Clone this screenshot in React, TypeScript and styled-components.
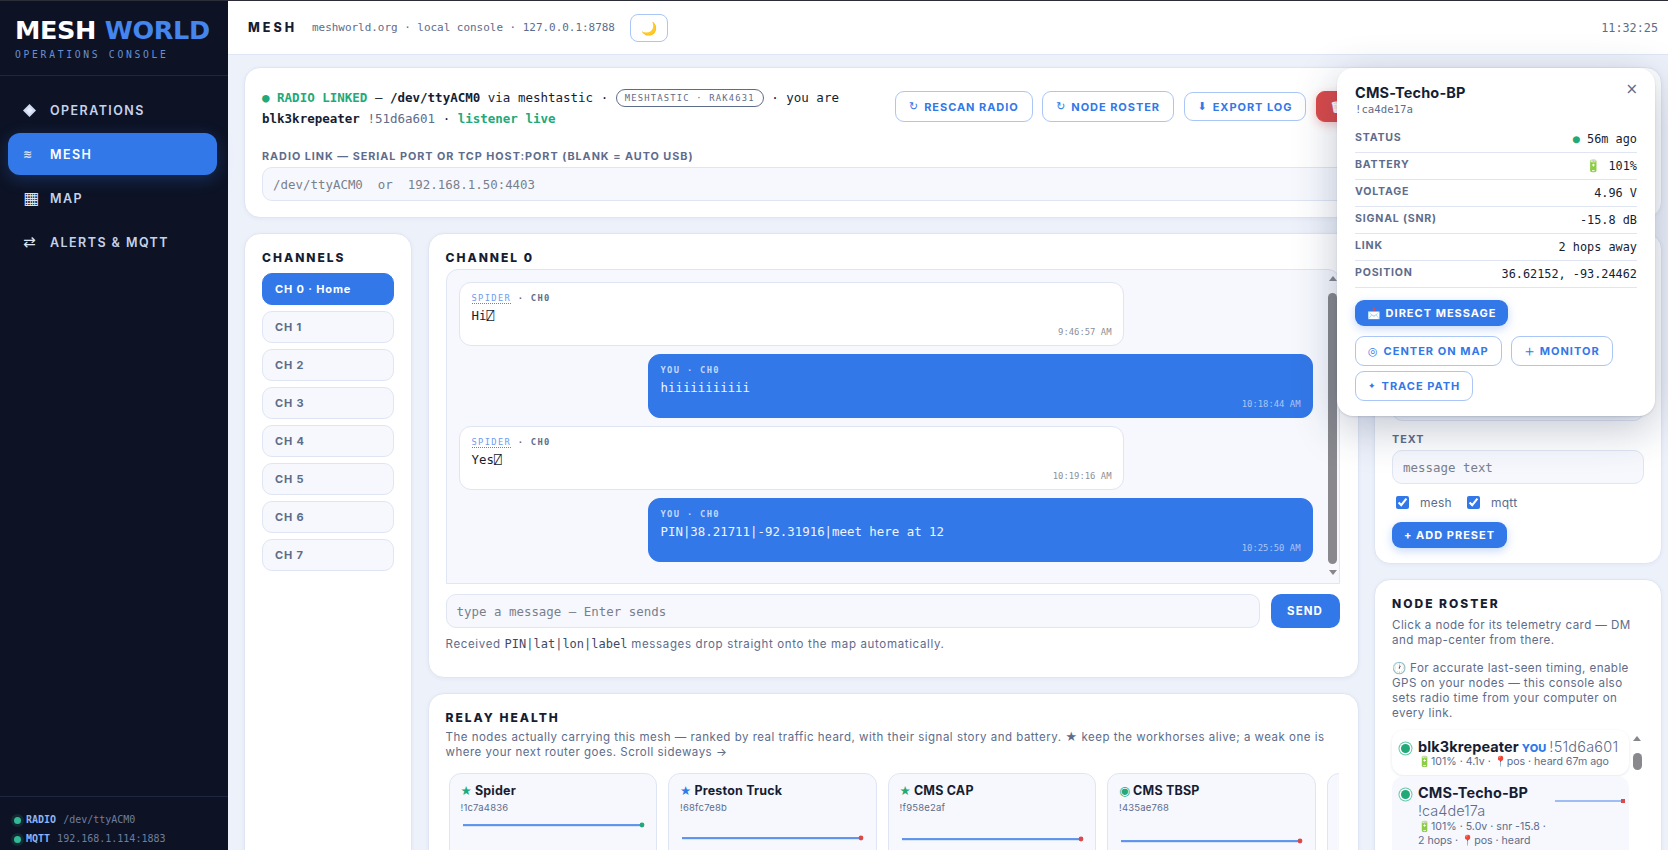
import React from "react";
import styled, { createGlobalStyle } from "styled-components";

const SANS = `Inter, "Noto Sans", "Liberation Sans", sans-serif`;
const MONO = `"DejaVu Sans Mono", "Liberation Mono", monospace`;
const BLUE = "#3378e8";
const INK = "#161d33";
const GREY = "#5e6c8b";
const LINE = "#dfe5f2";
const SOFT = "#f6f8fd";
const GREEN = "#22a97a";
const RED = "#d94a4a";

const Global = createGlobalStyle`
  html, body { margin: 0; height: 100%; overflow: hidden; background: #edf1fa; }
  * { box-sizing: border-box; }
  body { font-family: ${SANS}; color: ${INK}; }
`;

const Shell = styled.div`
  display: flex; height: 100vh; border-top: 1px solid #2b2e38; overflow: hidden; position: relative;
`;
const Sidebar = styled.aside`
  width: 228px; flex: none; background: #0d1325; display: flex; flex-direction: column; color: #fff;
`;
const Brand = styled.div`
  height: 75px; padding: 15px 15px 0; border-bottom: 1px solid #1d2742; flex: none;
`;
const Logo = styled.div`
  font: 800 25.5px/28px "DejaVu Sans", sans-serif; letter-spacing: -0.35px; white-space: nowrap;
  span { color: #4485ee; }
`;
const LogoSub = styled.div`
  font: 500 9.7px/12px ${MONO}; letter-spacing: 2.7px; color: #6a8fd2; margin-top: 5px;
`;
const Nav = styled.nav`
  flex: 1; padding: 13px 11px 0 8px; display: flex; flex-direction: column; gap: 2.2px;
`;
const NavItem = styled.div<{ $active?: boolean }>`
  height: 42px; border-radius: 12px; display: flex; align-items: center; padding-left: 15px;
  font: 600 12.5px ${SANS}; letter-spacing: 1.45px;
  color: ${(p) => (p.$active ? "#fff" : "#c5d2ec")};
  background: ${(p) => (p.$active ? BLUE : "transparent")};
  box-shadow: ${(p) => (p.$active ? "0 4px 16px rgba(51,120,232,.28)" : "none")};
`;
const NavIcon = styled.span<{ $size?: number; $bold?: boolean }>`
  width: 27px; flex: none; display: flex; align-items: center;
  font: ${(p) => (p.$bold ? 700 : 400)} ${(p) => p.$size ?? 15}px/1 "DejaVu Sans", sans-serif; color: #dbe4f7;
`;
const SideFoot = styled.div`
  height: 54px; border-top: 1px solid #1d2742; padding: 18px 0 0 14px; flex: none;
  display: flex; flex-direction: column; gap: 9px;
`;
const FootRow = styled.div`
  display: flex; align-items: center; gap: 5px; font: 400 10px/10px ${MONO}; color: #6f7e9e; white-space: nowrap;
  b { color: #8db4f2; font-weight: 700; margin-right: 1px; }
`;
const FootDot = styled.i`
  width: 7px; height: 7px; border-radius: 50%; background: #33b995; box-shadow: 0 0 0 3px rgba(51,185,149,.14);
`;

const Column = styled.div`
  flex: 1; min-width: 0; display: flex; flex-direction: column;
`;
const Topbar = styled.header`
  height: 54px; flex: none; background: #fff; border-bottom: 1px solid ${LINE};
  display: flex; align-items: center; padding: 0 10px 0 20px;
`;
const TopTitle = styled.div`
  font: 800 12.5px ${SANS}; letter-spacing: 3px; color: ${INK}; width: 64px;
`;
const TopMeta = styled.div`
  font: 400 10.95px ${MONO}; color: ${GREY}; white-space: nowrap;
`;
const ThemeButton = styled.div`
  width: 38px; height: 28px; margin-left: 15px; border: 1px solid #a9c6f6; border-radius: 8px;
  display: flex; align-items: center; justify-content: center; font-size: 13px;
`;
const Clock = styled.div`
  margin-left: auto; font: 400 11.8px ${MONO}; color: ${GREY};
`;

const Main = styled.main`
  flex: 1; min-height: 0; padding: 12px 6px 0 16px; display: flex; flex-direction: column; gap: 15px; overflow: hidden;
`;
const Card = styled.section`
  background: #fff; border: 1px solid ${LINE}; border-radius: 16px; padding: 17px 17px;
  box-shadow: 0 1px 4px rgba(40,60,110,.05);
`;
const Banner = styled(Card)`
  height: 151px; flex: none; padding: 17px 17px 0;
`;
const BannerTop = styled.div`
  display: flex; align-items: flex-start; height: 66px; overflow: visible;
`;
const Status = styled.div`
  width: 590px; flex: none; font: 400 12.5px/21px ${MONO}; color: ${INK}; padding-top: 2px;
`;
const Ok = styled.span`
  color: ${GREEN};
`;
const OkBold = styled(Ok)`
  font-weight: 700;
`;
const Strong = styled.b`
  font-weight: 700;
`;
const Dim = styled.span`
  color: ${GREY};
`;
const Pill = styled.span`
  display: inline-block; border: 1px solid ${GREY}; border-radius: 10px; padding: 0 8px;
  font: 400 8.8px/16px ${MONO}; letter-spacing: 1.2px; color: ${GREY}; vertical-align: 1px;
`;
const Actions = styled.div`
  display: flex; flex: none; gap: 9.5px; align-items: center; padding-top: 6px; margin-left: 43px;
`;
const GhostButton = styled.div`
  height: 31px; padding: 0 13px; border: 1px solid #a9c6f6; border-radius: 9px; background: #fff;
  color: ${BLUE}; font: 700 11px ${SANS}; letter-spacing: 0.95px; display: inline-flex; align-items: center; gap: 5px; white-space: nowrap;
  i { font: 400 11px "DejaVu Sans", sans-serif; }
`;
const ShortButton = styled(GhostButton)`
  height: 29px;
`;
const RedButton = styled(GhostButton)`
  background: ${RED}; border-color: ${RED}; color: #fff; box-shadow: 0 3px 10px rgba(217,74,74,.3);
`;
const FieldLabel = styled.label`
  display: block; font: 700 10.8px/12px ${SANS}; letter-spacing: 0.98px; color: ${GREY}; margin-bottom: 4px; white-space: nowrap;
`;
const TextField = styled.input`
  display: block; width: 100%; height: 34px; border: 1px solid ${LINE}; border-radius: 10px; background: ${SOFT};
  padding: 0 10px; font: 400 12.45px ${MONO}; color: ${INK}; outline: none;
  &::placeholder { color: #7a7f8c; opacity: 1; }
`;

const Grid = styled.div`
  flex: 1; min-height: 0; display: grid; grid-template-columns: 168px 931px 288px; gap: 15px 15.5px; align-items: stretch;
`;
const Stack = styled.div`
  display: flex; flex-direction: column; gap: 15px; min-height: 0;
`;
const CardTitle = styled.h2`
  margin: 0; font: 800 12px/14px ${SANS}; letter-spacing: 2px; color: ${INK}; white-space: nowrap;
`;
const ChannelList = styled(Card)`
  height: 640px; padding-top: 17px; display: flex; flex-direction: column; gap: 6px;
  h2 { margin-bottom: 2px; }
`;
const ChannelButton = styled.div<{ $on?: boolean }>`
  height: 32px; border-radius: 10px; padding-left: 12px; display: flex; align-items: center;
  font: 700 11px ${SANS}; letter-spacing: 0.85px;
  color: ${(p) => (p.$on ? "#fff" : GREY)};
  background: ${(p) => (p.$on ? BLUE : SOFT)};
  border: 1px solid ${(p) => (p.$on ? BLUE : LINE)};
`;
const ChatCard = styled(Card)`
  height: 445px; flex: none; padding: 17px 17px 0;
`;
const MsgFrame = styled.div`
  margin-top: 4px; height: 315px; background: ${SOFT}; border: 1px solid ${LINE}; border-radius: 12px 12px 0 0;
  display: flex; width: 894px;
`;
const MsgList = styled.div`
  flex: 1; min-width: 0; padding: 12px 14px 0 12px; display: flex; flex-direction: column; gap: 8px;
`;
const Msg = styled.div<{ $me?: boolean }>`
  width: 665px; height: 64px; border-radius: 12px; padding: 8px 12px; position: relative; flex: none;
  align-self: ${(p) => (p.$me ? "flex-end" : "flex-start")};
  background: ${(p) => (p.$me ? BLUE : "#fff")};
  border: 1px solid ${(p) => (p.$me ? BLUE : LINE)};
  color: ${(p) => (p.$me ? "#eef4ff" : INK)};
`;
const MsgMeta = styled.div<{ $me?: boolean }>`
  font: 700 8.8px/14px ${MONO}; letter-spacing: 1.3px; color: ${(p) => (p.$me ? "#c2d7fb" : GREY)};
  span { color: #6f9def; border-bottom: 1px dotted #4f87ea; font-weight: 500; }
`;
const MsgText = styled.div`
  font: 400 12.4px/17px ${MONO}; margin-top: 2px;
`;
const MsgTime = styled.div<{ $me?: boolean }>`
  position: absolute; right: 11px; bottom: 8px; font: 400 8.9px ${MONO};
  color: ${(p) => (p.$me ? "#a9c6f6" : "#8b8f9a")};
`;
const Rail = styled.div`
  width: 12px; flex: none; display: flex; flex-direction: column; align-items: center; padding: 6px 0 8px;
`;
const ArrowUp = styled.i`
  width: 0; height: 0; flex: none; border: 4.5px solid transparent; border-top: 0; border-bottom: 5px solid #86868c;
`;
const ArrowDown = styled.i`
  width: 0; height: 0; flex: none; margin-top: 6px; border: 4.5px solid transparent; border-bottom: 0; border-top: 5px solid #86868c;
`;
const Thumb = styled.div<{ $h?: number }>`
  width: 9px; margin-top: 12px; flex: ${(p) => (p.$h ? `0 0 ${p.$h}px` : "1")}; background: #88888d; border-radius: 5px;
`;
const ComposeRow = styled.div`
  display: flex; gap: 11px; margin-top: 10px; width: 894px;
`;
const ComposeField = styled(TextField)`
  flex: 1; width: auto;
`;
const SendButton = styled.div`
  width: 69px; height: 34px; border-radius: 10px; background: ${BLUE}; color: #fff; display: flex; align-items: center; justify-content: center;
  font: 700 11.5px ${SANS}; letter-spacing: 1.1px;
`;
const Hint = styled.p`
  margin: 0; font: 400 11.5px/15px ${SANS}; color: ${GREY}; letter-spacing: 0.5px;
  code { font: 400 12px ${MONO}; color: #3e4a66; letter-spacing: 0; }
`;
const ComposeHint = styled(Hint)`
  margin-top: 9px; letter-spacing: 0.65px;
`;
const RelayCard = styled(Card)`
  flex: 1; min-height: 220px; padding: 17px 17px 0; overflow: hidden;
`;
const RelayHint = styled(Hint)`
  margin-top: 5px; width: 890px;
`;
const RelayTrack = styled.div`
  margin-top: 13px; display: flex; gap: 11px; width: 893px; overflow: hidden; padding-left: 3px;
`;
const RelayNode = styled.div`
  flex: 0 0 208.5px; min-width: 0; height: 200px; background: ${SOFT}; border: 1px solid ${LINE}; border-radius: 12px; padding: 9px 11px 11px;
`;
const RelayName = styled.div`
  font: 700 12.5px/16px ${SANS}; letter-spacing: 0.2px; color: ${INK}; white-space: nowrap;
`;
const Mark = styled.span<{ $c: string }>`
  color: ${(p) => p.$c}; font-family: "DejaVu Sans", sans-serif; margin-right: 3px;
`;
const RelayId = styled.div`
  font: 400 9.5px/12px ${SANS}; color: ${GREY}; margin-top: 3px; letter-spacing: 0.2px;
`;
const Spark = styled.svg`
  display: block; margin-top: 5px;
`;

const PresetCard = styled(Card)`
  height: 331px; flex: none; padding: 17px 17px 0;
`;
const PresetHint = styled(Hint)`
  margin: 6px 0 70px;
`;
const FieldGap = styled.div`
  margin-top: 13px;
`;
const Checks = styled.div`
  display: flex; align-items: center; margin: 12px 0 0 4px; height: 13px; font: 400 12px ${SANS}; color: ${GREY};
  label { display: flex; align-items: center; gap: 11px; margin-right: 15px; letter-spacing: 0.25px; }
  input { margin: 0; width: 13px; height: 13px; accent-color: ${BLUE}; }
`;
const PrimaryButton = styled.div`
  display: inline-flex; align-items: center; gap: 5px; height: 26px; padding: 0 12px; border-radius: 9px; background: ${BLUE}; color: #fff;
  font: 700 11px ${SANS}; letter-spacing: 1px; white-space: nowrap; box-shadow: 0 3px 10px rgba(51,120,232,.28);
`;
const AddButton = styled(PrimaryButton)`
  margin-top: 13px;
`;
const RosterCard = styled(Card)`
  flex: 1; padding: 17px 17px 0; overflow: hidden;
`;
const RosterHint = styled(Hint)`
  margin-top: 7px; font-size: 11.6px; letter-spacing: 0.42px;
`;
const RosterNote = styled(RosterHint)`
  margin-top: 13px;
`;
const RosterWrap = styled.div`
  display: flex; margin-top: 9px; gap: 2px;
`;
const RosterList = styled.div`
  width: 237px; flex: none; display: flex; flex-direction: column; gap: 1px;
`;
const RosterItem = styled.div<{ $soft?: boolean }>`
  border-radius: 12px; display: flex; padding: 8px 7px 6px 7px; gap: 8px; position: relative;
  background: ${(p) => (p.$soft ? SOFT : "#fff")};
  box-shadow: ${(p) => (p.$soft ? "none" : "0 1px 3px rgba(40,60,110,.12)")};
`;
const NodeDot = styled.i`
  width: 9px; height: 9px; flex: none; margin: 6px 0 0 2px; border-radius: 50%; background: ${GREEN};
  box-shadow: 0 0 0 1.5px #fff, 0 0 0 2.5px #67c8a8;
`;
const RosterBody = styled.div<{ $narrow?: boolean }>`
  min-width: 0; ${(p) => (p.$narrow ? "width: 137px;" : "")}
`;
const RosterName = styled.div`
  font: 700 14.5px/17px ${SANS}; letter-spacing: 0.1px; color: ${INK}; white-space: nowrap;
  em { font: 800 11px ${SANS}; color: ${BLUE}; margin: 0 3px 0 3px; }
  span { font: 300 14.5px ${SANS}; color: ${GREY}; letter-spacing: .2px; }
`;
const RosterId = styled.div`
  font: 300 14.5px/19px ${SANS}; color: ${GREY};
`;
const RosterSub = styled.div`
  font: 400 10.6px/14px ${SANS}; color: ${GREY};
`;
const RosterSpark = styled.svg`
  position: absolute; right: 3px; top: 21px;
`;

const Popover = styled.div`
  position: absolute; left: 1337px; top: 67px; width: 318px; height: 348px; background: #fff; border-radius: 16px;
  padding: 16px 18px; box-shadow: 0 12px 44px rgba(30,45,85,.28), 0 1px 2px rgba(30,45,85,.15); z-index: 5;
`;
const PopName = styled.div`
  font: 700 14.5px/18px ${SANS}; letter-spacing: 0.15px; color: ${INK};
`;
const PopClose = styled.div`
  position: absolute; right: 17px; top: 12px; font: 400 15px/18px "DejaVu Sans", sans-serif; color: ${GREY};
`;
const PopId = styled.div`
  font: 400 10.7px/14px ${MONO}; color: ${GREY}; margin-top: 1px;
`;
const PopTable = styled.div`
  margin-top: 9px;
`;
const PopRow = styled.div`
  height: 27px; display: flex; justify-content: space-between; align-items: center; border-bottom: 1px solid ${LINE};
`;
const PopKey = styled.span`
  font: 700 10.6px ${SANS}; letter-spacing: 0.8px; color: ${GREY}; margin-top: -3px;
`;
const PopVal = styled.span`
  font: 400 11.85px ${MONO}; color: ${INK};
`;
const PopActions = styled.div`
  margin-top: 12px; display: flex; flex-wrap: wrap; gap: 5px 9px;
`;
const RowBreak = styled.div`
  flex: 0 0 100%; height: 0;
`;
const PopGhost = styled(GhostButton)`
  height: 30px; padding: 0 12px; letter-spacing: 1px;
`;
const PlusIcon = styled.i`
  && { font: 400 15px/1 "DejaVu Sans", sans-serif; margin: 0 -3px 0 -2px; }
`;
const TraceIcon = styled.i`
  && { font: 400 9px/1 "DejaVu Sans", sans-serif; }
`;

const channels = ["CH 0 · Home", "CH 1", "CH 2", "CH 3", "CH 4", "CH 5", "CH 6", "CH 7"];
const messages = [
  { me: false, who: "SPIDER", text: "Hi⍁", time: "9:46:57 AM" },
  { me: true, who: "YOU", text: "hiiiiiiiiiii", time: "10:18:44 AM" },
  { me: false, who: "SPIDER", text: "Yes⍁", time: "10:19:16 AM" },
  { me: true, who: "YOU", text: "PIN|38.21711|-92.31916|meet here at 12", time: "10:25:50 AM" },
];
const relays = [
  { name: "Spider", id: "!1c7a4836", mark: "★", c: GREEN, y: 6, end: GREEN },
  { name: "Preston Truck", id: "!68fc7e8b", mark: "★", c: BLUE, y: 19, end: RED },
  { name: "CMS CAP", id: "!f958e2af", mark: "★", c: GREEN, y: 20, end: RED },
  { name: "CMS TBSP", id: "!435ae768", mark: "◉", c: GREEN, y: 22, end: RED },
  { name: "", id: "", mark: "", c: GREEN, y: 22, end: RED },
];
const rows: [string, React.ReactNode][] = [
  ["STATUS", <><Ok>●</Ok> 56m ago</>],
  ["BATTERY", <>🔋 101%</>],
  ["VOLTAGE", "4.96 V"],
  ["SIGNAL (SNR)", "-15.8 dB"],
  ["LINK", "2 hops away"],
  ["POSITION", "36.62152, -93.24462"],
];

export default function App() {
  return (
    <Shell>
      <Global />
      <Sidebar>
        <Brand>
          <Logo>MESH <span>WORLD</span></Logo>
          <LogoSub>OPERATIONS CONSOLE</LogoSub>
        </Brand>
        <Nav>
          <NavItem>
            <NavIcon>
              <svg width="13" height="13" viewBox="0 0 13 13">
                <path d="M6.5 0 13 6.5 6.5 13 0 6.5Z" fill="#cfdbf4" />
                <path d="M6.5 3.2 9.8 6.5 6.5 9.8 3.2 6.5Z" fill="#e6edfb" />
              </svg>
            </NavIcon>
            OPERATIONS
          </NavItem>
          <NavItem $active><NavIcon $size={11} $bold>≋</NavIcon>MESH</NavItem>
          <NavItem><NavIcon $size={17}>▦</NavIcon>MAP</NavItem>
          <NavItem><NavIcon>⇄</NavIcon>ALERTS &amp; MQTT</NavItem>
        </Nav>
        <SideFoot>
          <FootRow><FootDot /><span><b>RADIO</b> /dev/ttyACM0</span></FootRow>
          <FootRow><FootDot /><span><b>MQTT</b> 192.168.1.114:1883</span></FootRow>
        </SideFoot>
      </Sidebar>
      <Column>
        <Topbar>
          <TopTitle>MESH</TopTitle>
          <TopMeta>meshworld.org · local console · 127.0.0.1:8788</TopMeta>
          <ThemeButton>🌙</ThemeButton>
          <Clock>11:32:25</Clock>
        </Topbar>
        <Main>
          <Banner>
            <BannerTop>
              <Status>
                <Ok>●</Ok> <OkBold>RADIO LINKED</OkBold> — <Strong>/dev/ttyACM0</Strong> via meshtastic · <Pill>MESHTASTIC · RAK4631</Pill> · you are <Strong>blk3krepeater</Strong> <Dim>!51d6a601</Dim> · <OkBold>listener live</OkBold>
              </Status>
              <Actions>
                <GhostButton><i>↻</i>RESCAN RADIO</GhostButton>
                <GhostButton><i>↻</i>NODE ROSTER</GhostButton>
                <ShortButton><i>⬇</i>EXPORT LOG</ShortButton>
                <RedButton>🗑 CLEAR</RedButton>
              </Actions>
            </BannerTop>
            <FieldLabel>RADIO LINK — SERIAL PORT OR TCP HOST:PORT (BLANK = AUTO USB)</FieldLabel>
            <TextField placeholder="/dev/ttyACM0  or  192.168.1.50:4403" />
          </Banner>
          <Grid>
            <ChannelList>
              <CardTitle>CHANNELS</CardTitle>
              {channels.map((c, i) => (
                <ChannelButton key={c} $on={i === 0}>{c}</ChannelButton>
              ))}
            </ChannelList>
            <Stack>
              <ChatCard>
                <CardTitle>CHANNEL 0</CardTitle>
                <MsgFrame>
                  <MsgList>
                    {messages.map((m) => (
                      <Msg key={m.time} $me={m.me}>
                        <MsgMeta $me={m.me}>{m.me ? m.who : <span>{m.who}</span>} · CH0</MsgMeta>
                        <MsgText>{m.text}</MsgText>
                        <MsgTime $me={m.me}>{m.time}</MsgTime>
                      </Msg>
                    ))}
                  </MsgList>
                  <Rail>
                    <ArrowUp />
                    <Thumb />
                    <ArrowDown />
                  </Rail>
                </MsgFrame>
                <ComposeRow>
                  <ComposeField placeholder="type a message — Enter sends" />
                  <SendButton>SEND</SendButton>
                </ComposeRow>
                <ComposeHint>Received <code>PIN|lat|lon|label</code> messages drop straight onto the map automatically.</ComposeHint>
              </ChatCard>
              <RelayCard>
                <CardTitle>RELAY HEALTH</CardTitle>
                <RelayHint>The nodes actually carrying this mesh — ranked by real traffic heard, with their signal story and battery. ★ keep the workhorses alive; a weak one is where your next router goes. Scroll sideways →</RelayHint>
                <RelayTrack>
                  {relays.map((r, i) => (
                    <RelayNode key={i}>
                      <RelayName><Mark $c={r.c}>{r.mark}</Mark>{r.name}</RelayName>
                      <RelayId>{r.id}</RelayId>
                      <Spark width="184" height="34" viewBox="0 0 184 34">
                        <line x1="2" x2="181" y1={r.y + 1} y2={r.y + 1} stroke="#b9d0f7" strokeWidth="1" />
                        <line x1="2" x2="181" y1={r.y} y2={r.y} stroke={BLUE} strokeWidth="1.4" />
                        <circle cx="181" cy={r.y} r="2.4" fill={r.end} />
                      </Spark>
                    </RelayNode>
                  ))}
                </RelayTrack>
              </RelayCard>
            </Stack>
            <Stack>
              <PresetCard>
                <CardTitle>QUICK PRESETS</CardTitle>
                <PresetHint>One-tap messages for the mesh and MQTT. Saved on this machine.</PresetHint>
                <FieldLabel>LABEL</FieldLabel>
                <TextField placeholder="preset label" />
                <FieldGap />
                <FieldLabel>TEXT</FieldLabel>
                <TextField placeholder="message text" />
                <Checks>
                  <label><input type="checkbox" defaultChecked />mesh</label>
                  <label><input type="checkbox" defaultChecked />mqtt</label>
                </Checks>
                <AddButton>+ ADD PRESET</AddButton>
              </PresetCard>
              <RosterCard>
                <CardTitle>NODE ROSTER</CardTitle>
                <RosterHint>Click a node for its telemetry card — DM and map-center from there.</RosterHint>
                <RosterNote>🕐 For accurate last-seen timing, enable GPS on your nodes — this console also sets radio time from your computer on every link.</RosterNote>
                <RosterWrap>
                  <RosterList>
                    <RosterItem>
                      <NodeDot />
                      <RosterBody>
                        <RosterName>blk3krepeater<em>YOU</em><span>!51d6a601</span></RosterName>
                        <RosterSub>🔋101% · 4.1v · 📍pos · heard 67m ago</RosterSub>
                      </RosterBody>
                    </RosterItem>
                    <RosterItem $soft>
                      <NodeDot />
                      <RosterBody $narrow>
                        <RosterName>CMS-Techo-BP</RosterName>
                        <RosterId>!ca4de17a</RosterId>
                        <RosterSub>🔋101% · 5.0v · snr -15.8 · 2 hops · 📍pos · heard 56m ago</RosterSub>
                      </RosterBody>
                      <RosterSpark width="71" height="8" viewBox="0 0 71 8">
                        <line x1="0" x2="68" y1="4" y2="4" stroke="#7faaf0" strokeWidth="1.5" />
                        <rect x="66" y="2" width="4" height="4" fill={RED} />
                      </RosterSpark>
                    </RosterItem>
                  </RosterList>
                  <Rail>
                    <ArrowUp />
                    <Thumb $h={17} />
                  </Rail>
                </RosterWrap>
              </RosterCard>
            </Stack>
          </Grid>
        </Main>
      </Column>
      <Popover>
        <PopName>CMS-Techo-BP</PopName>
        <PopClose>×</PopClose>
        <PopId>!ca4de17a</PopId>
        <PopTable>
          {rows.map(([k, v]) => (
            <PopRow key={k}>
              <PopKey>{k}</PopKey>
              <PopVal>{v}</PopVal>
            </PopRow>
          ))}
        </PopTable>
        <PopActions>
          <PrimaryButton>📩 DIRECT MESSAGE</PrimaryButton>
          <RowBreak />
          <PopGhost><i>◎</i>CENTER ON MAP</PopGhost>
          <PopGhost><PlusIcon>＋</PlusIcon>MONITOR</PopGhost>
          <PopGhost><TraceIcon>✦</TraceIcon>TRACE PATH</PopGhost>
        </PopActions>
      </Popover>
    </Shell>
  );
}
